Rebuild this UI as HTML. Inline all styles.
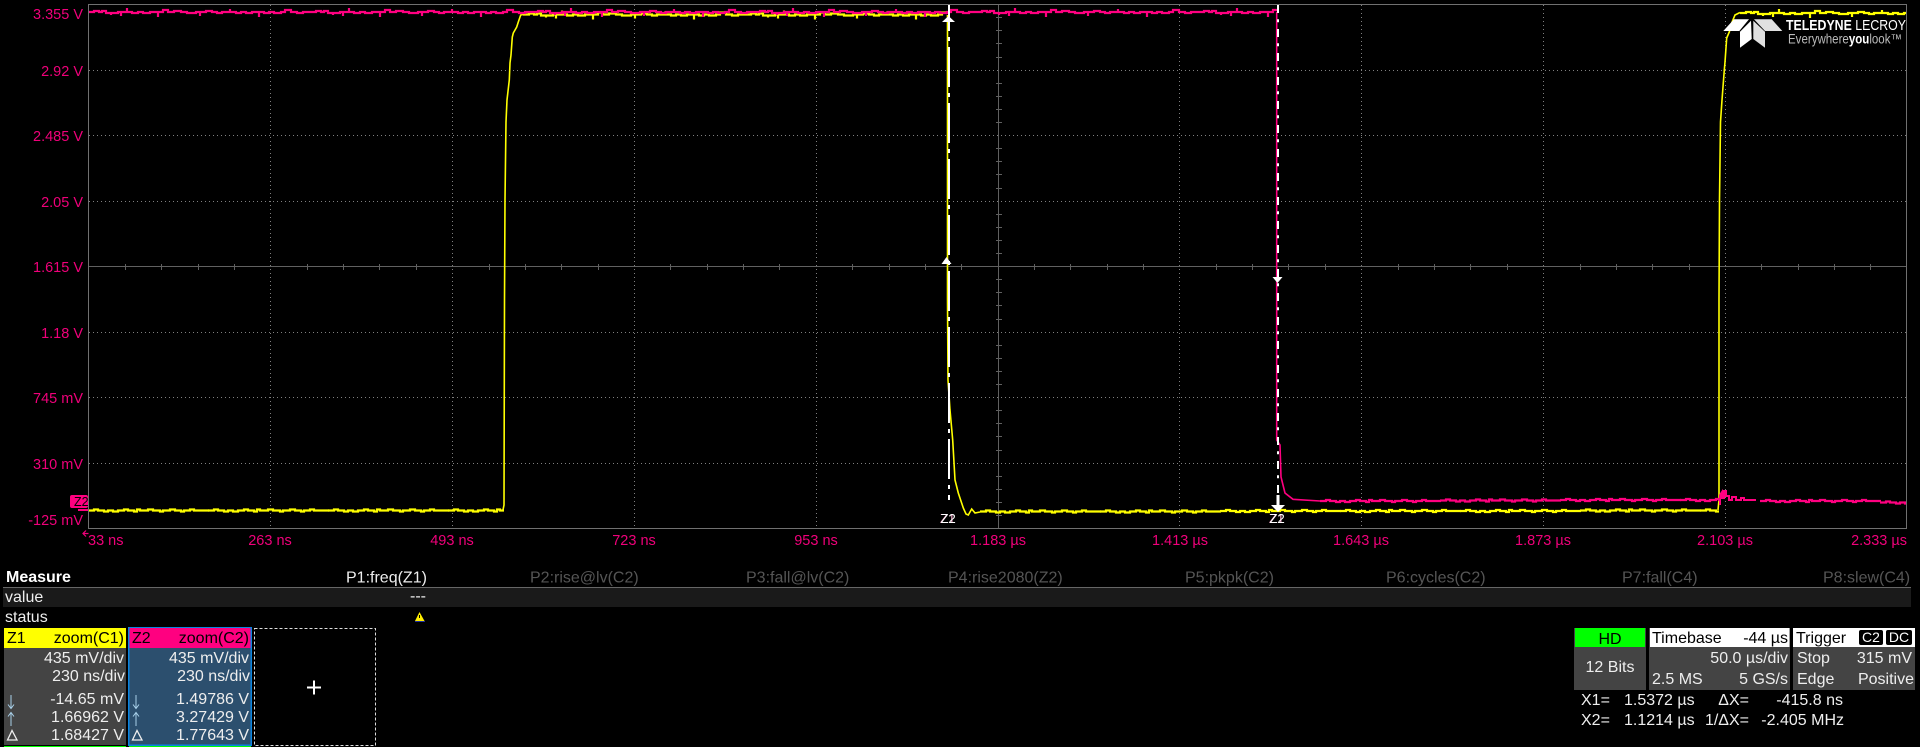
<!DOCTYPE html>
<html><head><meta charset="utf-8"><title>Oscilloscope</title>
<style>
html,body{margin:0;padding:0;background:#000;width:1920px;height:747px;overflow:hidden}
svg{display:block}
text{font-family:"Liberation Sans",sans-serif;font-size:16px;fill:#eee}
.a{font-size:14.5px;fill:#f0007a}
.m{text-anchor:middle}.e{text-anchor:end}
.d{fill:#555}.k{fill:#000}
</style></head><body>
<svg width="1920" height="747" viewBox="0 0 1920 747" xmlns="http://www.w3.org/2000/svg">
<defs>
<path id="n" fill="none" stroke-width="2.2" d="M0 0h6v-1h5v1h3v-1h4v2h5v2v-2h7v-1h3v4v-4h6v-4v4h5v1h6v-1h5v1h7v-1h8v5v-5h5v-2h5v2h6v-1h7v1h6v1h9v-1h4v4v-4h6v-1h6v1h5v1h5v-1h8v-3v3h6v1h5v-1h5v1h6v-1h7v5v-5h5v1h5v-1h5v1h7v-1h4v-2h6v2h6v1h6v-1h7"/>
<path id="s" fill="none" stroke-width="2.2" d="M0 0h6v-1h4v1h6v1h4v-1h5v1h5v-1h6v-1h4v1h6v1h3v-2h3v1h8v-1h5v1h7v1h3v-1h7v-1h5v1h6v1h3v-1h6v-1h4v1h15"/>
<clipPath id="cp1"><rect x="89" y="0" width="1188" height="40"/></clipPath>
<clipPath id="cy1"><rect x="523" y="0" width="424" height="40"/></clipPath>
<clipPath id="cy2"><rect x="1740" y="0" width="166" height="40"/></clipPath>
<clipPath id="cb1"><rect x="89" y="480" width="415" height="48"/></clipPath>
<clipPath id="cb2"><rect x="980" y="480" width="739" height="48"/></clipPath>
<clipPath id="cb3"><rect x="1320" y="480" width="399" height="48"/></clipPath>
<clipPath id="cb4"><rect x="1760" y="480" width="146" height="48"/></clipPath>
</defs>

<!-- grid -->
<g stroke="#808080" stroke-width="1" stroke-dasharray="1 3" shape-rendering="crispEdges">
<path d="M270.5 5V528M452.5 5V528M634.5 5V528M816.5 5V528M1179.5 5V528M1361.5 5V528M1543.5 5V528M1725.5 5V528"/>
<path d="M89 70.5H1906M89 135.5H1906M89 201.5H1906M89 332.5H1906M89 397.5H1906M89 463.5H1906"/>
</g>
<g stroke="#606060" stroke-width="1" shape-rendering="crispEdges">
<path d="M998.5 5V528M89 266.5H1906"/>
<path d="M996 17.5h6M996 30.5h6M996 43.5h6M996 57.5h6M996 83.5h6M996 96.5h6M996 109.5h6M996 122.5h6M996 148.5h6M996 161.5h6M996 174.5h6M996 188.5h6M996 214.5h6M996 227.5h6M996 240.5h6M996 253.5h6M996 279.5h6M996 292.5h6M996 305.5h6M996 319.5h6M996 345.5h6M996 358.5h6M996 371.5h6M996 384.5h6M996 410.5h6M996 423.5h6M996 436.5h6M996 450.5h6M996 476.5h6M996 489.5h6M996 502.5h6M996 515.5h6"/>
<path d="M125.5 264v6M161.5 264v6M198.5 264v6M234.5 264v6M307.5 264v6M343.5 264v6M379.5 264v6M416.5 264v6M489.5 264v6M525.5 264v6M561.5 264v6M598.5 264v6M670.5 264v6M707.5 264v6M743.5 264v6M779.5 264v6M852.5 264v6M889.5 264v6M925.5 264v6M961.5 264v6M1034.5 264v6M1070.5 264v6M1107.5 264v6M1143.5 264v6M1216.5 264v6M1252.5 264v6M1288.5 264v6M1325.5 264v6M1398.5 264v6M1434.5 264v6M1470.5 264v6M1507.5 264v6M1580.5 264v6M1616.5 264v6M1652.5 264v6M1689.5 264v6M1761.5 264v6M1798.5 264v6M1834.5 264v6M1870.5 264v6"/>
</g>
<rect x="88.5" y="4.5" width="1818" height="524" fill="none" stroke="#707070" stroke-width="1" shape-rendering="crispEdges"/>

<!-- yellow trace -->
<g stroke="#ffff00" fill="none" stroke-width="2">
<g clip-path="url(#cb1)"><use href="#s" x="88" y="510.5"/><use href="#s" x="208" y="510.5"/><use href="#s" x="328" y="510.5"/><use href="#s" x="448" y="510.5"/></g>
<path stroke-width="1.6" d="M503 510L504 505L504.5 300L505 200L506 122L507 100L509.3 80L510 63L511 55L512.3 37L513.3 33L516.7 27L518.3 22L520.7 15L523 14.5"/>
<g clip-path="url(#cy1)"><use href="#n" x="523" y="14.5"/><use href="#n" x="745" y="14.5"/></g>
<path stroke-width="1.6" d="M947.5 15V300L948 380L950 410L952.7 440L955 480L958.3 493L963.3 508L966 514L968.3 515L971.7 509L975 513L980 512"/>
<g clip-path="url(#cb2)"><use href="#s" x="980" y="511.5"/><use href="#s" x="1100" y="511.5"/><use href="#s" x="1220" y="511"/><use href="#s" x="1340" y="511"/><use href="#s" x="1460" y="511"/><use href="#s" x="1580" y="510.5"/><use href="#s" x="1700" y="510.5"/></g>
<path stroke-width="1.6" d="M1718 510L1719 500V300L1719.5 200L1720.5 122L1722 100L1724.3 70L1725 62L1726.7 38L1729.3 32L1731.7 23L1735 15L1740 12.5"/>
<g clip-path="url(#cy2)"><use href="#n" x="1740" y="13"/></g>
</g>

<!-- pink trace -->
<g stroke="#ff0080" fill="none" stroke-width="2">
<g clip-path="url(#cp1)"><use href="#n" x="88" y="12"/><use href="#n" x="310" y="12"/><use href="#n" x="532" y="12"/><use href="#n" x="754" y="12"/><use href="#n" x="976" y="12"/><use href="#n" x="1198" y="12"/></g>
<path stroke-width="1.6" d="M1276.7 12V440L1280 445L1281 477L1285 493L1293 499.3L1320 501"/>
<g clip-path="url(#cb3)"><use href="#s" x="1320" y="501"/><use href="#s" x="1440" y="500.5"/><use href="#s" x="1560" y="500"/><use href="#s" x="1680" y="500"/></g>
<path d="M1718 500h2v5v-10l2 -3v6h2v-7h2v5h3v4h3v-3h4v3h5v-2h3v2h12"/>
<g clip-path="url(#cb4)"><use href="#s" x="1760" y="501"/><use href="#s" x="1880" y="502.5"/></g>
</g>

<!-- cursors -->
<g fill="none" stroke="#fff" stroke-width="2">
<path d="M949 5V500" stroke-dasharray="40 6 4 6" stroke-dashoffset="14"/>
<path d="M1278 5V500" stroke-dasharray="8 6.3 3 6.7" stroke-dashoffset="0"/>
</g>
<g fill="#fff">
<path d="M948.5 16l6.5 6h-13z"/>
<path d="M946.5 257l5 7h-10z"/>
<path d="M1277.5 283l-5 -6h10z"/>
<path d="M1278 512l-7 -7h14z"/>
<rect x="1276.5" y="495" width="3" height="11"/>
</g>
<text x="940" y="523" style="font-size:13px;fill:#ffb0d4">Z1</text>
<text x="940.6" y="523" style="font-size:13px;fill:#fff">Z2</text>
<text x="1269" y="523" style="font-size:13px;fill:#ffb0d4">Z1</text>
<text x="1269.6" y="523" style="font-size:13px;fill:#fff">Z2</text>

<!-- logo -->
<g fill="#fff">
<path d="M1723.3 31L1734 19.3H1749L1739.3 31Z"/>
<path d="M1754 19.3H1771.7L1782.3 31H1765Z" fill="#e0e0e0"/>
<path d="M1740 31.7L1751 20.7L1751.7 39L1740 47.7Z"/>
<path d="M1753.3 20.7L1765 31.7V47.7L1753.3 39Z" fill="#e0e0e0"/>
</g>
<text x="1786" y="30" textLength="120" lengthAdjust="spacingAndGlyphs" style="font-size:14.5px;fill:#fff"><tspan style="font-weight:bold">TELEDYNE</tspan> LECROY</text>
<text x="1788" y="43.5" textLength="114" lengthAdjust="spacingAndGlyphs" style="font-size:13.5px;fill:#bbb">Everywhere<tspan style="font-weight:bold;fill:#fff">you</tspan>look™</text>

<!-- y labels -->
<text class="a e" x="83" y="19">3.355 V</text>
<text class="a e" x="83" y="76">2.92 V</text>
<text class="a e" x="83" y="141">2.485 V</text>
<text class="a e" x="83" y="207">2.05 V</text>
<text class="a e" x="83" y="272">1.615 V</text>
<text class="a e" x="83" y="338">1.18 V</text>
<text class="a e" x="83" y="403">745 mV</text>
<text class="a e" x="83" y="469">310 mV</text>
<text class="a e" x="83" y="525">-125 mV</text>
<rect x="70" y="495" width="18" height="13" rx="2" fill="#ff0080"/>
<rect x="78" y="509" width="10" height="2" fill="#ff0080"/>
<text x="74" y="506" class="k" style="font-size:12.5px">Z2</text>

<!-- x labels -->
<path d="M88.5 533.5H83M86 530.5L83 533.5L86 536.5" stroke="#f0007a" fill="none" stroke-width="1.2"/>
<text class="a" x="88" y="545">33 ns</text>
<text class="a m" x="270" y="545">263 ns</text>
<text class="a m" x="452" y="545">493 ns</text>
<text class="a m" x="634" y="545">723 ns</text>
<text class="a m" x="816" y="545">953 ns</text>
<text class="a m" x="998" y="545">1.183 µs</text>
<text class="a m" x="1180" y="545">1.413 µs</text>
<text class="a m" x="1361" y="545">1.643 µs</text>
<text class="a m" x="1543" y="545">1.873 µs</text>
<text class="a m" x="1725" y="545">2.103 µs</text>
<text class="a e" x="1907" y="545">2.333 µs</text>

<!-- measure table -->
<rect x="3" y="588" width="1908" height="19" fill="#1a1a1a"/>
<rect x="3" y="587" width="1908" height="1" fill="#666"/>
<text x="6" y="582" style="font-weight:bold;font-size:16px;fill:#fff">Measure</text>
<text x="346" y="582.5">P1:freq(Z1)</text>
<text x="530" y="582.5" class="d">P2:rise@lv(C2)</text>
<text x="746" y="582.5" class="d">P3:fall@lv(C2)</text>
<text x="948" y="582.5" class="d">P4:rise2080(Z2)</text>
<text x="1185" y="582.5" class="d">P5:pkpk(C2)</text>
<text x="1386" y="582.5" class="d">P6:cycles(C2)</text>
<text x="1622" y="582.5" class="d">P7:fall(C4)</text>
<text x="1823" y="582.5" class="d">P8:slew(C4)</text>
<text x="5" y="602">value</text>
<text x="5" y="622">status</text>
<text x="426" y="601" class="e">---</text>
<path d="M419.5 612L424.5 621H415Z" fill="#ffee00"/>
<rect x="419" y="615" width="1" height="3" fill="#000"/>
<rect x="415" y="621" width="10" height="1" fill="#2030a0"/>

<!-- Z1 -->
<rect x="4" y="628" width="122" height="20" fill="#ffff00"/>
<rect x="4" y="648" width="122" height="97" fill="#444"/>
<rect x="4" y="746" width="122" height="1" fill="#00ff00"/>
<text x="7" y="643" class="k">Z1</text>
<text x="124" y="643" class="e k">zoom(C1)</text>
<text x="124" y="663" class="e">435 mV/div</text>
<text x="125" y="681" class="e">230 ns/div</text>
<text x="124" y="704" class="e">-14.65 mV</text>
<text x="124" y="722" class="e">1.66962 V</text>
<text x="124" y="740" class="e">1.68427 V</text>
<path d="M11 695V708M8 704.5L11 708.5L14 704.5M11 726V713M8 716.5L11 712.5L14 716.5" stroke="#a8cfe8" stroke-width="1" fill="none"/>
<path d="M12 730.5L7.5 740H17Z" fill="none" stroke="#eee" stroke-width="1.3"/>

<!-- Z2 -->
<rect x="128" y="627" width="124" height="119" fill="#0a84e0"/>
<rect x="129.5" y="648" width="121" height="96.5" fill="#2c4f6e"/>
<rect x="129.5" y="628" width="121" height="20" fill="#ff0080"/>
<rect x="129" y="746" width="122" height="1" fill="#00ff00"/>
<text x="132" y="643" class="k">Z2</text>
<text x="249" y="643" class="e k">zoom(C2)</text>
<text x="249" y="663" class="e">435 mV/div</text>
<text x="250" y="681" class="e">230 ns/div</text>
<text x="249" y="704" class="e">1.49786 V</text>
<text x="249" y="722" class="e">3.27429 V</text>
<text x="249" y="740" class="e">1.77643 V</text>
<path d="M136 695V708M133 704.5L136 708.5L139 704.5M136 726V713M133 716.5L136 712.5L139 716.5" stroke="#a8cfe8" stroke-width="1" fill="none"/>
<path d="M137 730.5L132.5 740H142Z" fill="none" stroke="#eee" stroke-width="1.3"/>

<!-- add box -->
<rect x="254.5" y="628.5" width="121" height="117" fill="none" stroke="#ddd" stroke-width="1" stroke-dasharray="3 2" shape-rendering="crispEdges"/>
<path d="M307 687.5h14M314 680.5v14" stroke="#fff" stroke-width="2" fill="none"/>

<!-- HD / timebase / trigger -->
<rect x="1574" y="628" width="72" height="62" fill="#444"/>
<rect x="1575" y="628" width="70" height="19" fill="#00ff00"/>
<text x="1610" y="644" class="m k">HD</text>
<text x="1610" y="672" class="m">12 Bits</text>

<rect x="1649" y="628" width="141" height="62" fill="#444"/>
<rect x="1650" y="628" width="139.5" height="19" fill="#fff"/>
<text x="1652" y="643" class="k">Timebase</text>
<text x="1788" y="643" class="e k">-44 µs</text>
<text x="1788" y="663" class="e">50.0 µs/div</text>
<text x="1652" y="684">2.5 MS</text>
<text x="1788" y="684" class="e">5 GS/s</text>

<rect x="1793" y="628" width="122" height="62" fill="#444"/>
<rect x="1793" y="628" width="122" height="19" fill="#fff"/>
<text x="1796" y="643" class="k">Trigger</text>
<rect x="1859" y="630" width="24" height="15" rx="2" fill="#000"/>
<rect x="1886" y="630" width="26" height="15" rx="2" fill="#000"/>
<text x="1871" y="642" class="m" style="font-size:14px;fill:#fff">C2</text>
<text x="1899" y="642" class="m" style="font-size:14px;fill:#fff">DC</text>
<text x="1797" y="663">Stop</text>
<text x="1912" y="663" class="e">315 mV</text>
<text x="1797" y="684">Edge</text>
<text x="1914" y="684" class="e">Positive</text>

<text x="1581" y="705">X1=</text>
<text x="1624" y="705">1.5372 µs</text>
<text x="1749" y="705" class="e">ΔX=</text>
<text x="1843" y="705" class="e">-415.8 ns</text>
<text x="1581" y="725">X2=</text>
<text x="1624" y="725">1.1214 µs</text>
<text x="1749" y="725" class="e">1/ΔX=</text>
<text x="1844" y="725" class="e">-2.405 MHz</text>
</svg>
</body></html>
